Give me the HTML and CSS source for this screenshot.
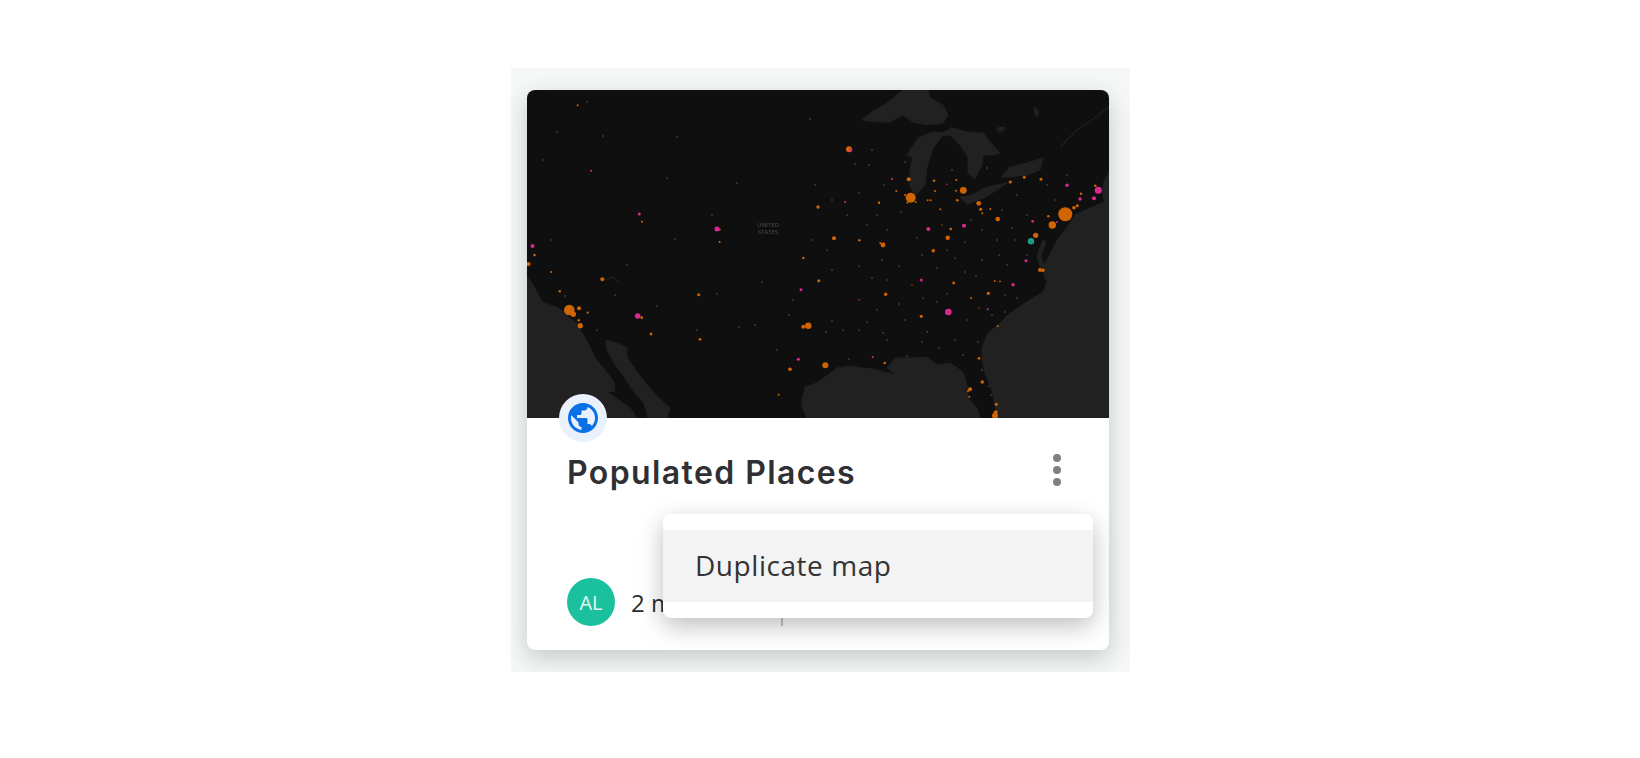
FILE: index.html
```html
<!DOCTYPE html>
<html lang="en">
<head>
  <meta charset="UTF-8" />
  <title>Populated Places</title>
  <link rel="stylesheet" href="styles.css">
</head>
<body>
  <div class="panel">
    <div class="card">
      <svg class="map" viewBox="0 0 582 328" width="582" height="328">
        <g class="water">
          <path d="M0 187 5 193 10 202 15 212 23 215 30 217 37 222 42 228 50 233 55 243 62 255 68 268 78 280 87 292 88 301 80 302 92 310 103 318 110 328H0Z"/>
          <path d="M79 250 85 252 92 254 100 258 100 267 110 282 120 295 132 308 143 318 140 328H121L117 313 107 302 97 287 87 273 80 260Z"/>
          <path d="M275 310 278 297 290 293 298 287 310 278 323 276 336 278 346 279 356 282 368 284 360 278 365 272 368 268 386 268 400 267 410 275 423 273 436 282 440 295 441 308 450 318 453 328H280L275 317Z"/>
          <path d="M472 328 468 317 465 300 458 283 455 270 455 257 461 243 471 235 481 225 495 215 506 208 516 202 520 193 516 182 518 173 525 160 530 150 540 137 548 125 563 118 582 110V328Z"/>
          <path d="M516 150 519 152 514 166 518 178 514 180 510 166Z"/>
          <path d="M582 82 577 92 575 103 578 113 582 112Z"/>
          <path d="M335 30 343 23 360 13 373 2 378 0H401L403 8 416 15 421 25 416 33 400 35 386 32 376 25 363 32 351 32Z"/>
          <path d="M380 65 391 48 406 42 415 43 425 38 440 42 456 43 463 52 473 63 466 65 456 65 455 75 448 89 441 83 441 67 433 55 423 45 415 46 406 58 400 77 398 95 391 103 388 104 383 97 383 80 386 67Z"/>
          <path d="M433 107 443 106 460 97 480 93 470 100 456 108 440 114Z"/>
          <path d="M474 87 483 77 500 73 516 68 513 80 500 85 483 87Z"/>
          <path d="M470 38 478 37 476 41 470 41Z"/>
          <path d="M508 17 512 22 510 27 507 22Z"/>
        </g>
        <path class="river" d="M533 57 540 50 550 40 565 30 582 17"/>
        <path class="river" d="M80 190 85 187 92 192"/>
        <text class="map-label" x="241" y="137">UNITED</text>
        <text class="map-label" x="241" y="144">STATES</text>
        <g class="dots-faint">
          <circle cx="30" cy="42"/><circle cx="76" cy="46"/><circle cx="150" cy="47"/><circle cx="283" cy="29"/>
          <circle cx="60" cy="12"/><circle cx="16" cy="70"/><circle cx="140" cy="88"/><circle cx="210" cy="93"/>
          <circle cx="288" cy="95"/><circle cx="332" cy="103"/><circle cx="357" cy="95"/><circle cx="342" cy="75"/>
          <circle cx="328" cy="74"/><circle cx="350" cy="125"/><circle cx="374" cy="122"/><circle cx="390" cy="148"/>
          <circle cx="415" cy="135"/><circle cx="444" cy="130"/><circle cx="475" cy="120"/><circle cx="490" cy="105"/>
          <circle cx="500" cy="125"/><circle cx="528" cy="110"/><circle cx="520" cy="95"/><circle cx="540" cy="85"/>
          <circle cx="305" cy="180"/><circle cx="332" cy="176"/><circle cx="355" cy="170"/><circle cx="385" cy="195"/>
          <circle cx="410" cy="178"/><circle cx="428" cy="168"/><circle cx="449" cy="186"/><circle cx="480" cy="175"/>
          <circle cx="478" cy="205"/><circle cx="465" cy="225"/><circle cx="440" cy="230"/><circle cx="410" cy="212"/>
          <circle cx="378" cy="230"/><circle cx="332" cy="240"/><circle cx="316" cy="240"/><circle cx="299" cy="242"/>
          <circle cx="322" cy="269"/><circle cx="380" cy="266"/><circle cx="451" cy="252"/><circle cx="428" cy="250"/>
          <circle cx="455" cy="280"/><circle cx="462" cy="296"/><circle cx="464" cy="305"/><circle cx="250" cy="260"/>
          <circle cx="228" cy="235"/><circle cx="212" cy="237"/><circle cx="190" cy="204"/><circle cx="170" cy="240"/>
          <circle cx="130" cy="216"/><circle cx="88" cy="205"/><circle cx="70" cy="240"/><circle cx="38" cy="206"/>
          <circle cx="235" cy="192"/><circle cx="262" cy="225"/><circle cx="305" cy="231"/><circle cx="100" cy="175"/>
          <circle cx="148" cy="149"/><circle cx="185" cy="125"/><circle cx="24" cy="150"/><circle cx="266" cy="210"/>
          <circle cx="345" cy="188"/><circle cx="360" cy="190"/><circle cx="372" cy="176"/><circle cx="395" cy="165"/>
          <circle cx="420" cy="160"/><circle cx="438" cy="152"/><circle cx="455" cy="140"/><circle cx="470" cy="150"/>
          <circle cx="488" cy="150"/><circle cx="500" cy="165"/><circle cx="485" cy="138"/><circle cx="472" cy="165"/>
          <circle cx="455" cy="170"/><circle cx="438" cy="182"/><circle cx="420" cy="204"/><circle cx="396" cy="208"/>
          <circle cx="372" cy="214"/><circle cx="350" cy="220"/><circle cx="340" cy="232"/><circle cx="360" cy="250"/>
          <circle cx="395" cy="252"/><circle cx="412" cy="258"/><circle cx="436" cy="265"/><circle cx="490" cy="208"/>
          <circle cx="478" cy="222"/><circle cx="452" cy="218"/><circle cx="360" cy="140"/><circle cx="340" cy="135"/>
          <circle cx="320" cy="125"/><circle cx="305" cy="110"/><circle cx="300" cy="160"/><circle cx="285" cy="150"/>
          <circle cx="460" cy="78"/><circle cx="425" cy="80"/><circle cx="378" cy="72"/><circle cx="345" cy="60"/>
        </g>
        <g class="dots-orange">
          <circle cx="538.3" cy="124.3" r="7"/><circle cx="525.3" cy="135" r="3.7"/><circle cx="383.7" cy="107.7" r="5"/>
          <circle cx="378" cy="105" r="1"/><circle cx="380.3" cy="112.7" r="1"/><circle cx="388.7" cy="112" r="1"/>
          <circle cx="436.3" cy="100.3" r="3.4"/><circle cx="322" cy="59.3" r="3"/><circle cx="381.7" cy="89.3" r="2"/>
          <circle cx="407" cy="90.7" r="1.3"/><circle cx="429.3" cy="90" r="1"/><circle cx="451.7" cy="113.3" r="2.4"/>
          <circle cx="453.7" cy="119.3" r="1.5"/><circle cx="455.3" cy="123.3" r="1"/><circle cx="463.3" cy="119" r="1"/>
          <circle cx="470.7" cy="129" r="2.3"/><circle cx="483.3" cy="92" r="1.6"/><circle cx="497.3" cy="87.3" r="1.5"/>
          <circle cx="514" cy="89.3" r="1.5"/><circle cx="508.7" cy="145.3" r="2.6"/><circle cx="521.3" cy="126.3" r="1.2"/>
          <circle cx="547" cy="117.7" r="1.8"/><circle cx="550.3" cy="115.7" r="1.5"/><circle cx="554" cy="103.7" r="1.2"/>
          <circle cx="568.3" cy="95.7" r="1.3"/><circle cx="430.3" cy="110.3" r="1.3"/><circle cx="420.7" cy="147.7" r="2.2"/>
          <circle cx="423.7" cy="139" r="1.3"/><circle cx="406.3" cy="160.7" r="1.7"/><circle cx="356" cy="155" r="2.4"/>
          <circle cx="353.3" cy="153" r="1"/><circle cx="307" cy="148.3" r="2"/><circle cx="332.3" cy="150.3" r="1.2"/>
          <circle cx="352" cy="112.7" r="1.2"/><circle cx="400.7" cy="110.3" r="1"/><circle cx="403.7" cy="110.3" r="1"/>
          <circle cx="413.3" cy="119.3" r="1"/><circle cx="429" cy="100.7" r="1"/><circle cx="408" cy="101" r="1"/><circle cx="369.3" cy="101" r="1"/>
          <circle cx="50.6" cy="15.3" r="1"/><circle cx="115" cy="131.7" r="1"/><circle cx="192.6" cy="139.5" r="1.1"/><circle cx="192.6" cy="152" r="1"/>
          <circle cx="7.5" cy="165" r="1.3"/><circle cx="1.6" cy="174" r="2"/><circle cx="24" cy="182" r="1"/><circle cx="291" cy="117" r="1.7"/>
          <circle cx="276.4" cy="168" r="1.2"/><circle cx="291.8" cy="190.7" r="1.5"/><circle cx="75.3" cy="189.3" r="2"/>
          <circle cx="32.7" cy="201.3" r="1.2"/><circle cx="42.3" cy="220" r="5.3"/><circle cx="46.3" cy="224.3" r="2.7"/>
          <circle cx="52" cy="218.3" r="2"/><circle cx="60.7" cy="222.7" r="1.1"/><circle cx="51.7" cy="230.3" r="1.2"/>
          <circle cx="53.3" cy="235.7" r="2.6"/><circle cx="114.7" cy="227.7" r="1.4"/><circle cx="124" cy="244" r="1.4"/>
          <circle cx="171.7" cy="204.7" r="1.5"/><circle cx="173" cy="249.3" r="1.4"/><circle cx="281.3" cy="235.7" r="3.2"/>
          <circle cx="276.3" cy="236.7" r="2"/><circle cx="263" cy="279.3" r="1.8"/><circle cx="251.7" cy="304.7" r="1"/>
          <circle cx="513" cy="180" r="2"/><circle cx="516" cy="180.3" r="1.8"/><circle cx="426.7" cy="193" r="1.4"/>
          <circle cx="461.3" cy="203.3" r="1.6"/><circle cx="358.7" cy="204.3" r="1.7"/><circle cx="394.3" cy="226.3" r="1.6"/>
          <circle cx="473" cy="191.3" r=".9"/><circle cx="467.7" cy="191" r=".9"/><circle cx="444" cy="208" r="1"/>
          <circle cx="298.3" cy="275.3" r="3"/><circle cx="357.7" cy="273" r="1.3"/><circle cx="452" cy="268.3" r="1.4"/>
          <circle cx="470.7" cy="236" r="1"/><circle cx="455.3" cy="292" r="1.7"/><circle cx="443" cy="299.3" r="2"/>
          <circle cx="441" cy="301.3" r="1"/><circle cx="442.3" cy="306.7" r="1"/><circle cx="469.3" cy="314.3" r="1.5"/>
          <circle cx="468.7" cy="322.3" r="2"/><circle cx="468" cy="325.7" r="3"/>
        </g>
        <g class="dots-pink">
          <circle cx="324" cy="60" r="1.5"/><circle cx="571.3" cy="100.3" r="3.5"/><circle cx="540" cy="95.3" r="1.7"/>
          <circle cx="553" cy="109" r="1.7"/><circle cx="567" cy="108.3" r="2"/><circle cx="505.7" cy="131.3" r="1.4"/>
          <circle cx="530" cy="132" r="1"/><circle cx="401.3" cy="139" r="2"/><circle cx="437" cy="135.7" r="2"/>
          <circle cx="365" cy="89" r="1"/><circle cx="419.7" cy="94.3" r=".8"/><circle cx="318" cy="112" r="1"/>
          <circle cx="64" cy="80.7" r="1"/><circle cx="112.3" cy="124" r="1.5"/><circle cx="190" cy="139" r="2.5"/>
          <circle cx="5.5" cy="156" r="2"/><circle cx="274" cy="199.7" r="1.5"/><circle cx="332" cy="209.7" r=".8"/>
          <circle cx="110.7" cy="226" r="2.8"/><circle cx="271.3" cy="269.3" r="1.5"/><circle cx="421.3" cy="222" r="3.3"/>
          <circle cx="394.3" cy="190" r="1.5"/><circle cx="499" cy="170.7" r="1.5"/><circle cx="486" cy="194.7" r="1.7"/>
          <circle cx="460.7" cy="219.3" r="1"/><circle cx="356.3" cy="242.7" r=".7"/><circle cx="345.7" cy="267" r="1"/>
          <circle cx="400.3" cy="241.7" r=".7"/>
        </g>
        <circle class="dot-green" cx="504" cy="151.3" r="3.2"/>
      </svg>
      <span class="badge">
        <svg viewBox="0 0 24 24" width="36" height="36"><path d="M12 2C6.48 2 2 6.48 2 12s4.48 10 10 10 10-4.48 10-10S17.52 2 12 2zm-1 17.93c-3.95-.49-7-3.85-7-7.93 0-.62.08-1.21.21-1.79L9 15v1c0 1.1.9 2 2 2v1.93zm6.9-2.54c-.26-.81-1-1.39-1.9-1.39h-1v-3c0-.55-.45-1-1-1H8v-2h2c.55 0 1-.45 1-1V7h2c1.1 0 2-.9 2-2v-.41c2.93 1.19 5 4.06 5 7.41 0 2.08-.8 3.97-2.1 5.39z"/></svg>
      </span>
      <div class="card-body">
        <div class="title-row">
          <h2 class="title">Populated Places</h2>
          <div class="kebab"><i></i><i></i><i></i></div>
        </div>
        <div class="meta-row">
          <span class="avatar">AL</span>
          <span class="meta-text">2 months ago</span>
          <span class="meta-sep"></span>
        </div>
      </div>
      <div class="menu">
        <div class="menu-item">Duplicate map</div>
      </div>
    </div>
  </div>
</body>
</html>
```
FILE: styles.css
```css
body {
  margin: 0;
  background-color: #fff;
  font-family: "Open Sans", sans-serif;
  color: #2c2d30;
}
.panel {
  width: 619px;
  height: 604px;
  box-sizing: border-box;
  margin: 68px 0 0 511px;
  padding: 22px 21px 0 16px;
  background-color: #f6f8f8;
}
.card {
  position: relative;
  width: 582px;
  height: 560px;
  border-radius: 8px;
  background-color: #fff;
  box-shadow: 0 8px 24px rgba(20, 30, 30, 0.22);
}
.map {
  display: block;
  border-radius: 8px 8px 0 0;
  background-color: #0f0f0f;
  filter: blur(0.6px);
}
.water {
  fill: #212121;
  stroke: #212121;
  stroke-width: 1;
  stroke-linejoin: round;
}
.river {
  fill: none;
  stroke: #1e1e1e;
  stroke-width: 1.5;
}
.map-label {
  font-family: "Open Sans", sans-serif;
  font-size: 6px;
  font-weight: 600;
  text-anchor: middle;
  fill: #444;
}
.dots-orange {
  fill: #d26503;
}
.dots-pink {
  fill: #d9298f;
}
.dots-faint {
  fill: #53300f;
}
.dots-faint circle {
  r: 1.1px;
}
.dot-green {
  fill: #1c9d7f;
}
.badge {
  position: absolute;
  left: 32px;
  top: 304px;
  width: 48px;
  height: 48px;
  display: flex;
  align-items: center;
  justify-content: center;
  border-radius: 50%;
  background-color: #e8f1fc;
  fill: #0b6fe6;
}
.card-body {
  padding: 32px 40px 0;
}
.title-row {
  display: flex;
  justify-content: space-between;
  align-items: center;
  height: 46px;
}
.title {
  margin: 0;
  font-family: Inter, sans-serif;
  font-size: 32px;
  font-weight: 600;
  letter-spacing: 1.4px;
  line-height: 46px;
  color: #2f3033;
}
.kebab {
  display: flex;
  flex-direction: column;
  gap: 4px;
  margin-right: 8px;
  margin-top: -6px;
}
.kebab i {
  width: 8px;
  height: 8px;
  border-radius: 50%;
  background-color: #808080;
}
.meta-row {
  display: flex;
  align-items: center;
  height: 48px;
  margin-top: 82px;
}
.avatar {
  width: 48px;
  height: 48px;
  display: flex;
  align-items: center;
  justify-content: center;
  border-radius: 50%;
  background-color: #1bc09f;
  color: #e4f7f3;
  font-size: 20px;
}
.meta-text {
  margin-left: 16px;
  font-size: 24px;
  font-weight: 500;
  white-space: nowrap;
}
.meta-sep {
  align-self: flex-end;
  width: 2px;
  height: 24px;
  margin-left: -3px;
  background-color: #c4c4c4;
}
.menu {
  position: absolute;
  left: 136px;
  top: 424px;
  width: 430px;
  padding: 16px 0;
  border-radius: 8px;
  background-color: #fff;
  box-shadow: 0 8px 24px rgba(0, 0, 0, 0.26);
}
.menu-item {
  height: 72px;
  padding-left: 32px;
  background-color: #f3f3f3;
  font-size: 28px;
  letter-spacing: 0.55px;
  line-height: 70px;
  color: #333;
}
```
